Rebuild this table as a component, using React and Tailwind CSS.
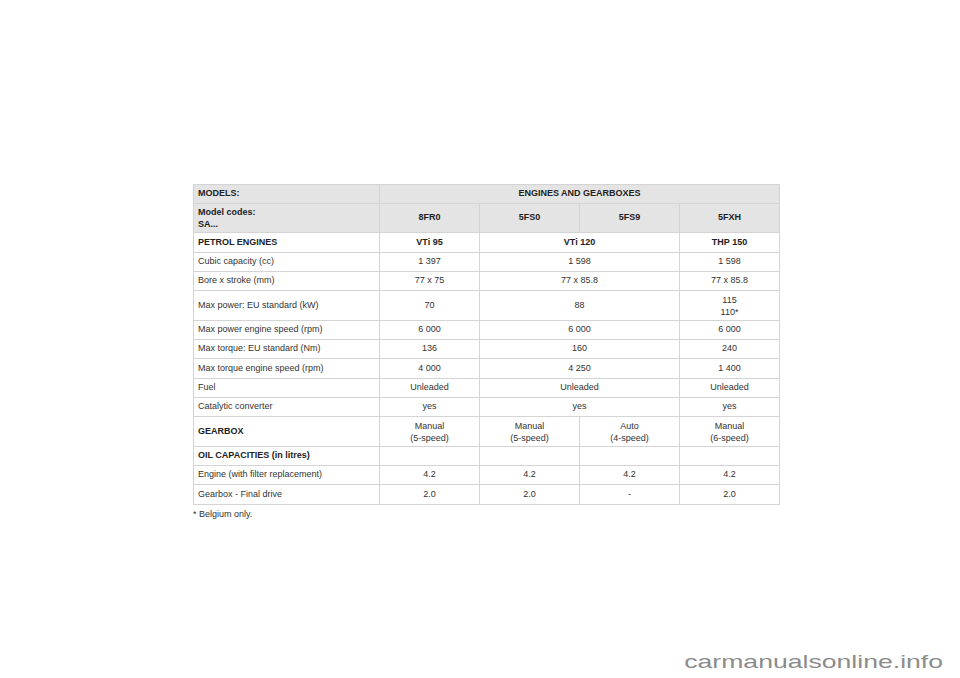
const rows = [
  { h: "h-[20px]", label: "PETROL ENGINES", bold: true, cells: [["VTi 95", 1], ["VTi 120", 2], ["THP 150", 1]] },
  { h: "h-[19px]", label: "Cubic capacity (cc)", cells: [["1 397", 1], ["1 598", 2], ["1 598", 1]] },
  { h: "h-[19px]", label: "Bore x stroke (mm)", cells: [["77 x 75", 1], ["77 x 85.8", 2], ["77 x 85.8", 1]] },
  { h: "h-[30px]", label: "Max power: EU standard (kW)", cells: [["70", 1], ["88", 2], [["115", "110*"], 1]] },
  { h: "h-[19px]", label: "Max power engine speed (rpm)", cells: [["6 000", 1], ["6 000", 2], ["6 000", 1]] },
  { h: "h-[19px]", label: "Max torque: EU standard (Nm)", cells: [["136", 1], ["160", 2], ["240", 1]] },
  { h: "h-[20px]", label: "Max torque engine speed (rpm)", cells: [["4 000", 1], ["4 250", 2], ["1 400", 1]] },
  { h: "h-[19px]", label: "Fuel", cells: [["Unleaded", 1], ["Unleaded", 2], ["Unleaded", 1]] },
  { h: "h-[19px]", label: "Catalytic converter", cells: [["yes", 1], ["yes", 2], ["yes", 1]] },
  {
    h: "h-[30px]", label: "GEARBOX", bold: true,
    cells: [[["Manual", "(5-speed)"], 1], [["Manual", "(5-speed)"], 1], [["Auto", "(4-speed)"], 1], [["Manual", "(6-speed)"], 1]],
  },
  { h: "h-[19px]", label: "OIL CAPACITIES (in litres)", bold: true, cells: [["", 1], ["", 1], ["", 1], ["", 1]] },
  { h: "h-[19px]", label: "Engine (with filter replacement)", cells: [["4.2", 1], ["4.2", 1], ["4.2", 1], ["4.2", 1]] },
  { h: "h-[20px]", label: "Gearbox - Final drive", cells: [["2.0", 1], ["2.0", 1], ["-", 1], ["2.0", 1]] },
];

const cell = "border border-[#d4d4d4] align-middle";

function Value({ v }) {
  if (Array.isArray(v)) {
    return (
      <div className="leading-[12px]">
        {v.map((t) => <div key={t}>{t}</div>)}
      </div>
    );
  }
  return v;
}

export default function App() {
  return (
    <div className="w-[960px] h-[678px] bg-white flex flex-col font-['Liberation_Sans',Arial,sans-serif] text-[#333] overflow-hidden">
      <div className="pt-[184px] pl-[193px]">
        <table className="border-collapse table-fixed w-[586px] text-[9px] border border-[#cfcfcf]">
          <colgroup>
            <col className="w-[186px]" />
            <col className="w-[100px]" />
            <col className="w-[100px]" />
            <col className="w-[100px]" />
            <col className="w-[100px]" />
          </colgroup>
          <tbody>
            <tr className="h-[19px] bg-[#e4e4e4] font-bold text-[#222]">
              <td className={`${cell} px-[4px]`}>MODELS:</td>
              <td className={`${cell} text-center`} colSpan={4}>ENGINES AND GEARBOXES</td>
            </tr>
            <tr className="h-[29px] bg-[#e4e4e4] font-bold text-[#222]">
              <td className={`${cell} px-[4px] leading-[12px]`}>
                <div>Model codes:</div>
                <div>SA...</div>
              </td>
              <td className={`${cell} text-center`}>8FR0</td>
              <td className={`${cell} text-center`}>5FS0</td>
              <td className={`${cell} text-center`}>5FS9</td>
              <td className={`${cell} text-center`}>5FXH</td>
            </tr>
            {rows.map((r) => (
              <tr key={r.label} className={r.h}>
                <td className={`${cell} px-[4px] ${r.bold ? "font-bold text-[#222]" : ""}`}>{r.label}</td>
                {r.cells.map(([v, span], i) => (
                  <td
                    key={i}
                    colSpan={span}
                    className={`${cell} text-center ${r.label === "PETROL ENGINES" ? "font-bold text-[#222]" : ""}`}
                  >
                    <Value v={v} />
                  </td>
                ))}
              </tr>
            ))}
          </tbody>
        </table>
        <p className="mt-[3px] text-[9px] text-[#333]">* Belgium only.</p>
      </div>
      <div className="mt-auto self-end pr-[12px] pb-[6px] text-[19px] leading-[20px] text-[#8c8c8c] scale-x-[1.4] origin-right">
        carmanualsonline.info
      </div>
    </div>
  );
}
